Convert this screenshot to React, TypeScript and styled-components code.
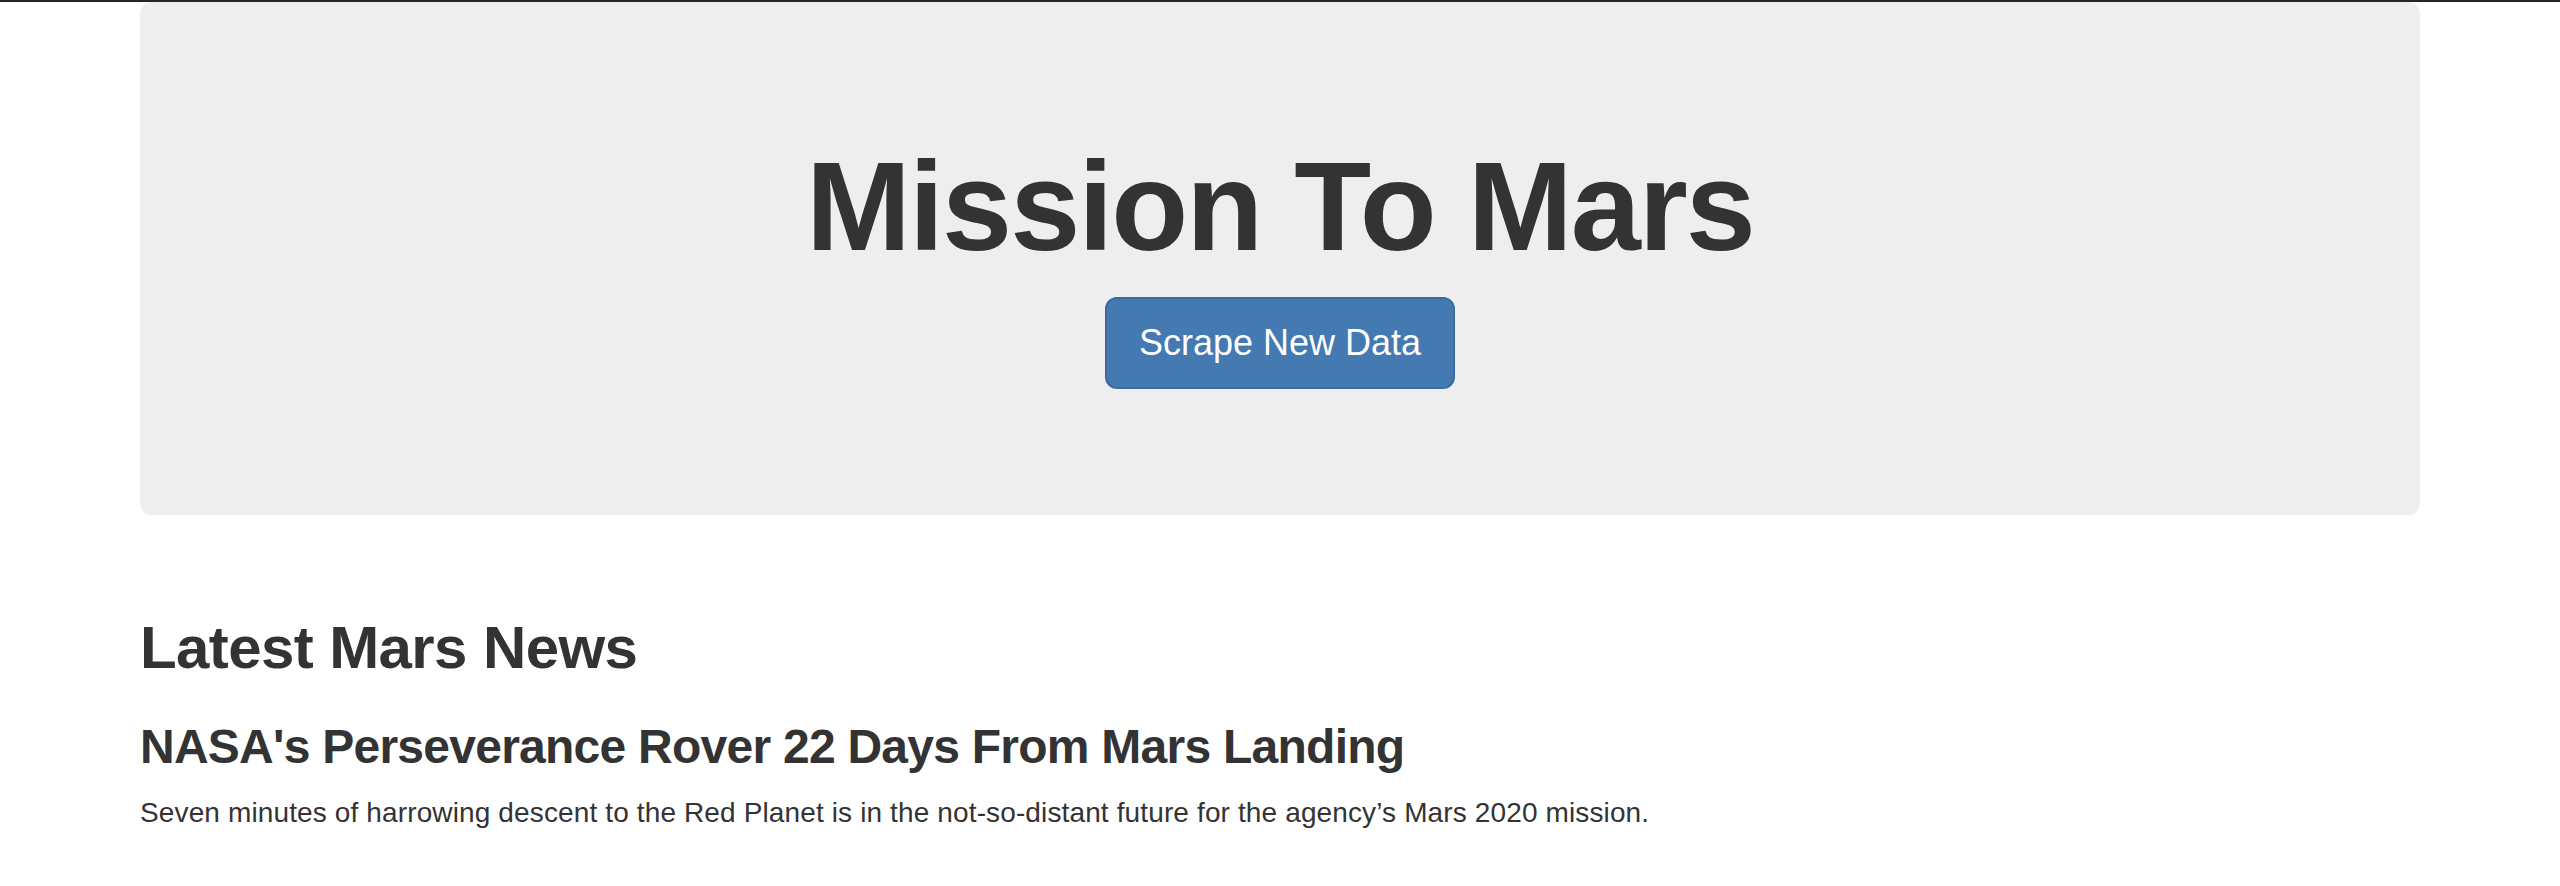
import React from "react";
import styled, { createGlobalStyle } from "styled-components";

const GlobalStyle = createGlobalStyle`
  html, body {
    margin: 0;
    padding: 0;
    background: #ffffff;
  }
  body {
    font-family: "Liberation Sans", Arial, Helvetica, sans-serif;
    font-size: 28px;
    line-height: 1.42857;
    color: #333333;
  }
  * { box-sizing: border-box; }
`;

const TopRule = styled.div`
  height: 2px;
  background: #262626;
`;

const Container = styled.div`
  width: 2340px;
  margin: 0 auto;
  padding: 0 30px;
`;

const Jumbotron = styled.header`
  background: #eeeeee;
  border-radius: 12px;
  padding: 96px 120px;
  margin-bottom: 60px;
  text-align: center;
`;

const Title = styled.h1`
  font-size: 126px;
  font-weight: 700;
  letter-spacing: -2px;
  line-height: 1.1;
  margin: 40px 0 20px;
  color: #333333;
`;

const ButtonRow = styled.div`
  display: flex;
  justify-content: center;
  margin-bottom: 30px;
`;

const Button = styled.button`
  font-family: inherit;
  font-size: 36px;
  line-height: 1.3333;
  padding: 20px 32px;
  color: #ffffff;
  background: #4479b2;
  border: 2px solid #3a6ba3;
  border-radius: 12px;
  cursor: pointer;
`;

const NewsSection = styled.section`
  display: flow-root;
`;

const SectionTitle = styled.h2`
  font-size: 60px;
  font-weight: 700;
  letter-spacing: -0.6px;
  line-height: 1.1;
  margin: 40px 0 20px;
`;

const NewsTitle = styled.h3`
  font-size: 48px;
  font-weight: 700;
  letter-spacing: -0.75px;
  line-height: 1.1;
  margin: 40px 0 20px;
`;

const NewsBody = styled.p`
  margin: 0 0 20px;
  letter-spacing: 0.13px;
`;

export default function App() {
  return (
    <>
      <GlobalStyle />
      <TopRule />
      <Container>
        <Jumbotron>
          <Title>Mission To Mars</Title>
          <ButtonRow>
            <Button>Scrape New Data</Button>
          </ButtonRow>
        </Jumbotron>
        <NewsSection>
          <SectionTitle>Latest Mars News</SectionTitle>
          <NewsTitle>NASA's Perseverance Rover 22 Days From Mars Landing</NewsTitle>
          <NewsBody>
            Seven minutes of harrowing descent to the Red Planet is in the not-so-distant future for the agency’s Mars 2020 mission.
          </NewsBody>
        </NewsSection>
      </Container>
    </>
  );
}
